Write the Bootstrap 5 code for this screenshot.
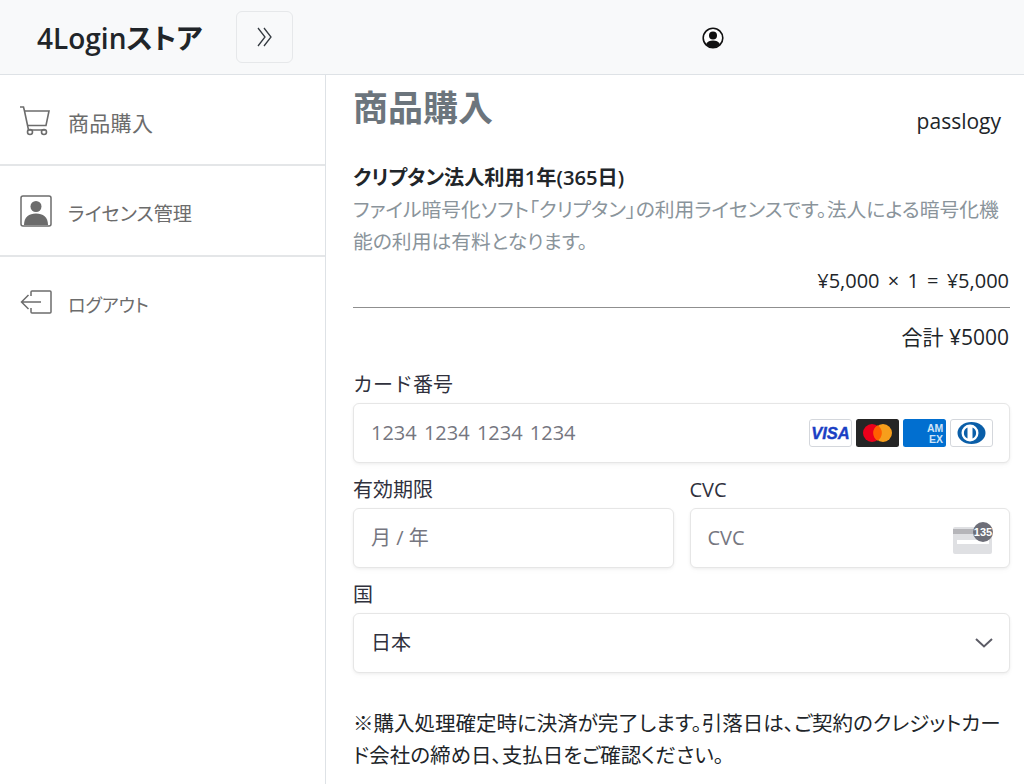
<!DOCTYPE html>
<html lang="ja">
<head>
<meta charset="utf-8">
<title>4Loginストア</title>
<link href="https://cdn.jsdelivr.net/npm/bootstrap@5.3.0/dist/css/bootstrap.min.css" rel="stylesheet">
<style>
html,body{height:784px;overflow:hidden;}
body{font-family:"Open Sans","Noto Sans CJK JP",sans-serif;font-size:20px;color:#212529;background:#fff;font-feature-settings:"palt";}
.top-bar{height:75px;background:#f8f9fa;border-bottom:1px solid #dee2e6;}
.brand-slot{width:236px;padding:2px 0 0 37px;font-size:28px;font-weight:600;line-height:1;color:#212529;}
.toggle-btn{width:57px;height:52px;margin-top:-1px;border:1px solid #e6e8ea;border-radius:6px;background:transparent;padding:0;}
.user-slot{flex:1;padding:2px 0 0 109px;}
.page-body{height:709px;}
.side-col{width:326px;border-right:1px solid #dee2e6;flex:none;}
.side-row{height:91px;padding:0 0 0 20px;color:#6c6c6c;gap:17px;border-bottom:2px solid #e4e6e8;}
.side-row svg{flex:none;}
.side-row:last-child{border-bottom:0;}
.side-text{font-size:21px;padding-top:9px;font-feature-settings:normal;margin-left:-1px;letter-spacing:.3px;}
.side-kana{font-size:19.200px;padding-top:8px;margin-left:-1px;}
.side-out{font-size:18px;padding-top:6px;margin-left:-1px;}
.main-col{flex:1;padding:0 14px 0 27px;min-width:0;}
.page-title{font-size:35px;font-weight:600;color:#6c757d;line-height:1;margin:0;padding-top:15px;}
.shop-name{font-size:21px;line-height:28px;padding-right:9px;margin-top:32px;}
.item-name{font-size:20.200px;font-weight:600;line-height:26px;margin-top:29px;}
.item-desc{font-size:19.800px;line-height:32px;color:#8a949b;margin-top:4px;}
.price-line{font-size:20px;line-height:26px;margin-top:10px;word-spacing:3px;padding-right:1px;}
.rule-line{border-top:1px solid #8f8f8f;margin:13px 0 14px;opacity:1;}
.total-line{font-size:21px;line-height:30px;padding-right:1px;}
.field-label{font-size:20px;line-height:24px;margin:0 0 6px;color:#30313d;font-feature-settings:normal;padding-top:1px;}
.field-box{height:60px;border:1px solid #e6e6e6;border-radius:6px;box-shadow:0 1px 3px rgba(0,0,0,.06),0 3px 6px rgba(0,0,0,.02);padding:0 16px 0 17px;font-size:20px;color:#757680;background:#fff;}
.num-hint{word-spacing:2px;}
.field-val{color:#30313d;}
.block-card{margin-top:20px;}
.block-exp{margin-top:14px;gap:16px;}
.block-country{margin-top:14px;}
.note-text{font-size:20.500px;line-height:32px;margin-top:34px;color:#212529;}
.card-logos{gap:4px;}
</style>
</head>
<body>
<header class="top-bar d-flex align-items-center">
  <div class="brand-slot">4Loginストア</div>
  <button class="toggle-btn d-flex align-items-center justify-content-center" type="button" aria-label="toggle">
    <svg width="18" height="20" viewBox="0 0 18 20" fill="none" stroke="#343a40" stroke-width="1.300"><path d="M2 1l7 9-7 9M8 1l7 9-7 9"/></svg>
  </button>
  <div class="user-slot d-flex justify-content-center">
    <svg width="22" height="22" viewBox="0 0 22 22"><circle cx="11" cy="11" r="9.800" fill="#fff" stroke="#111" stroke-width="1.600"/><circle cx="11" cy="8.500" r="4" fill="#111"/><path d="M3.900 17.200C5.500 14.600 8 13.600 11 13.600s5.500 1 7.100 3.600A9.800 9.800 0 0 1 3.900 17.200z" fill="#111"/></svg>
  </div>
</header>
<div class="page-body d-flex">
  <nav class="side-col">
    <div class="side-row d-flex align-items-center">
      <svg width="32" height="32" viewBox="0 0 32 32" fill="none" stroke="#6c6c6c" stroke-width="1.600"><path d="M0 3h3.500l1 4 4 19h16.500"/><path d="M4.500 7h24.500l-3 14.500H7.500"/><circle cx="10" cy="28" r="2.500"/><circle cx="24" cy="28" r="2.500"/></svg>
      <span class="side-text">商品購入</span>
    </div>
    <div class="side-row d-flex align-items-center">
      <svg width="32" height="32" viewBox="0 0 32 32"><rect x="1" y="1" width="30" height="30" rx="2" fill="none" stroke="#6c6c6c" stroke-width="1.500"/><circle cx="16" cy="11.500" r="5.500" fill="#6c6c6c"/><path d="M4 30c0-8 5-11.500 12-11.500S28 22 28 30z" fill="#6c6c6c"/></svg>
      <span class="side-kana">ライセンス管理</span>
    </div>
    <div class="side-row d-flex align-items-center">
      <svg width="32" height="32" viewBox="0 0 32 32" fill="none" stroke="#6c6c6c" stroke-width="1.500"><path d="M11 9V5a1 1 0 0 1 1-1h18a1 1 0 0 1 1 1v20a1 1 0 0 1-1 1H12a1 1 0 0 1-1-1v-4"/><path d="M21 15H2M8.500 8l-7 7 7 7"/></svg>
      <span class="side-out">ログアウト</span>
    </div>
  </nav>
  <main class="main-col">
    <div class="d-flex justify-content-between align-items-start">
      <h1 class="page-title">商品購入</h1>
      <div class="shop-name">passlogy</div>
    </div>
    <div class="item-name">クリプタン法人利用1年(365日)</div>
    <div class="item-desc">ファイル暗号化ソフト「クリプタン」の利用ライセンスです。法人による暗号化機能の利用は有料となります。</div>
    <div class="price-line text-end">¥5,000 × 1 = ¥5,000</div>
    <hr class="rule-line">
    <div class="total-line text-end">合計 ¥5000</div>
    <div class="block-card">
      <div class="field-label">カード番号</div>
      <div class="field-box d-flex align-items-center justify-content-between">
        <span class="num-hint">1234 1234 1234 1234</span>
        <span class="card-logos d-flex">
          <svg width="43" height="28" viewBox="0 0 43 28"><rect x=".5" y=".5" width="42" height="27" rx="2.500" fill="#fff" stroke="#d4d7dc"/><text x="21.500" y="19.500" text-anchor="middle" font-family="Liberation Sans" font-size="16.500" font-weight="700" font-style="italic" fill="#1a3fc4" stroke="#1a3fc4" stroke-width=".4">VISA</text></svg>
          <svg width="43" height="28" viewBox="0 0 43 28"><rect width="43" height="28" rx="2.500" fill="#252525"/><circle cx="16" cy="14" r="9" fill="#eb001b"/><circle cx="27" cy="14" r="9" fill="#f79e1b"/><path d="M21.500 6.300a9 9 0 0 1 0 15.400a9 9 0 0 1 0-15.400z" fill="#ff5f00"/></svg>
          <svg width="43" height="28" viewBox="0 0 43 28"><rect width="43" height="28" rx="2.500" fill="#016fd0"/><text x="24" y="13" font-family="Liberation Sans" font-size="10.500" font-weight="700" fill="#cfe4f7">AM</text><text x="26" y="24" font-family="Liberation Sans" font-size="10.500" font-weight="700" fill="#cfe4f7">EX</text></svg>
          <svg width="43" height="28" viewBox="0 0 43 28"><rect x=".5" y=".5" width="42" height="27" rx="2.500" fill="#fff" stroke="#d4d7dc"/><ellipse cx="21.500" cy="14" rx="14" ry="11" fill="#0a5ea8"/><circle cx="20" cy="14" r="8.500" fill="#fff"/><path d="M17.500 8.500v11a6 6 0 0 1 0-11zM22.500 8.500v11a6 6 0 0 0 0-11z" fill="#0a5ea8"/></svg>
        </span>
      </div>
    </div>
    <div class="block-exp d-flex">
      <div class="flex-fill w-50">
        <div class="field-label">有効期限</div>
        <div class="field-box d-flex align-items-center">月 / 年</div>
      </div>
      <div class="flex-fill w-50">
        <div class="field-label">CVC</div>
        <div class="field-box d-flex align-items-center justify-content-between">
          <span>CVC</span>
          <svg width="41" height="32" viewBox="0 0 41 32"><rect x="1" y="5" width="39" height="27" rx="2" fill="#dfe0e3"/><rect x="1" y="7" width="39" height="5" fill="#b5b5b9"/><rect x="5" y="18" width="32" height="4" fill="#fff"/><circle cx="31" cy="10" r="10" fill="#6d6e78"/><text x="31" y="14" text-anchor="middle" font-family="Liberation Sans" font-size="11" font-weight="700" fill="#fff">135</text></svg>
        </div>
      </div>
    </div>
    <div class="block-country">
      <div class="field-label">国</div>
      <div class="field-box d-flex align-items-center justify-content-between">
        <span class="field-val">日本</span>
        <svg width="18" height="10" viewBox="0 0 18 10" fill="none" stroke="#5c5c66" stroke-width="2"><path d="M1 1l8 7.500L17 1"/></svg>
      </div>
    </div>
    <p class="note-text mb-0">※購入処理確定時に決済が完了します。引落日は、ご契約のクレジットカード会社の締め日、支払日をご確認ください。</p>
  </main>
</div>
<script src="https://cdn.jsdelivr.net/npm/bootstrap@5.3.0/dist/js/bootstrap.bundle.min.js"></script>
</body>
</html>
